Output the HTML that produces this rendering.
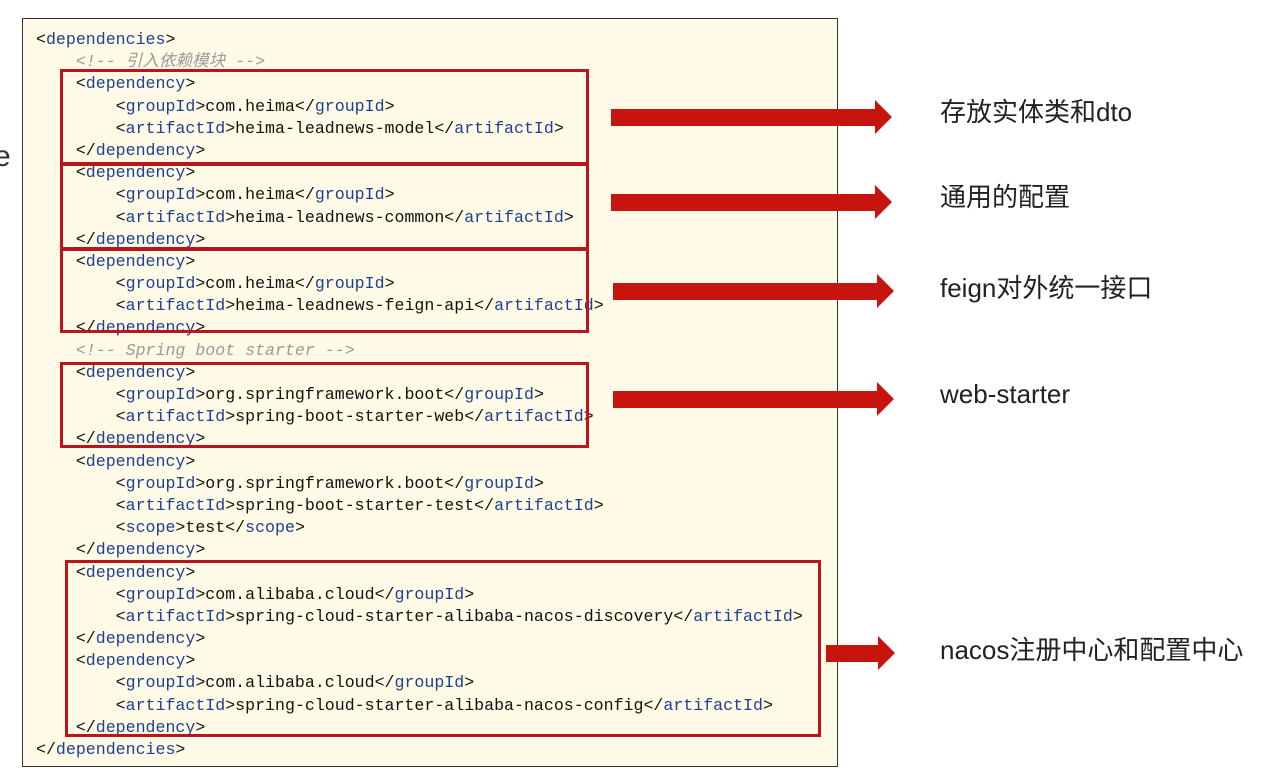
<!DOCTYPE html>
<html><head><meta charset="utf-8"><style>
body{margin:0;width:1261px;height:771px;background:#fff;position:relative;overflow:hidden;font-family:"Liberation Sans","Noto Sans CJK SC",sans-serif}
.code{position:absolute;left:22px;top:18px;width:816px;height:749px;background:#fffbe6;border:1px solid #333;box-sizing:border-box}
pre{position:absolute;left:36px;top:29px;margin:0;font-family:"Liberation Mono","Noto Sans CJK SC",monospace;font-size:16.6px;line-height:22.19px;color:#111}
.t{color:#1d3f94}.c{color:#9a9a9a;font-style:italic}
.box{position:absolute;border:3px solid #bb141a;box-sizing:border-box}
.lbl{position:absolute;left:940px;font-size:26px;color:#222;line-height:30px}
svg{position:absolute;left:0;top:0}
</style></head><body>
<div style="position:absolute;left:-6px;top:140px;font-size:30px;color:#333">e</div>
<div class="code"></div>
<pre>&lt;<span class="t">dependencies</span>&gt;
    <span class="c">&lt;!-- 引入依赖模块 --&gt;</span>
    &lt;<span class="t">dependency</span>&gt;
        &lt;<span class="t">groupId</span>&gt;com.heima&lt;/<span class="t">groupId</span>&gt;
        &lt;<span class="t">artifactId</span>&gt;heima-leadnews-model&lt;/<span class="t">artifactId</span>&gt;
    &lt;/<span class="t">dependency</span>&gt;
    &lt;<span class="t">dependency</span>&gt;
        &lt;<span class="t">groupId</span>&gt;com.heima&lt;/<span class="t">groupId</span>&gt;
        &lt;<span class="t">artifactId</span>&gt;heima-leadnews-common&lt;/<span class="t">artifactId</span>&gt;
    &lt;/<span class="t">dependency</span>&gt;
    &lt;<span class="t">dependency</span>&gt;
        &lt;<span class="t">groupId</span>&gt;com.heima&lt;/<span class="t">groupId</span>&gt;
        &lt;<span class="t">artifactId</span>&gt;heima-leadnews-feign-api&lt;/<span class="t">artifactId</span>&gt;
    &lt;/<span class="t">dependency</span>&gt;
    <span class="c">&lt;!-- Spring boot starter --&gt;</span>
    &lt;<span class="t">dependency</span>&gt;
        &lt;<span class="t">groupId</span>&gt;org.springframework.boot&lt;/<span class="t">groupId</span>&gt;
        &lt;<span class="t">artifactId</span>&gt;spring-boot-starter-web&lt;/<span class="t">artifactId</span>&gt;
    &lt;/<span class="t">dependency</span>&gt;
    &lt;<span class="t">dependency</span>&gt;
        &lt;<span class="t">groupId</span>&gt;org.springframework.boot&lt;/<span class="t">groupId</span>&gt;
        &lt;<span class="t">artifactId</span>&gt;spring-boot-starter-test&lt;/<span class="t">artifactId</span>&gt;
        &lt;<span class="t">scope</span>&gt;test&lt;/<span class="t">scope</span>&gt;
    &lt;/<span class="t">dependency</span>&gt;
    &lt;<span class="t">dependency</span>&gt;
        &lt;<span class="t">groupId</span>&gt;com.alibaba.cloud&lt;/<span class="t">groupId</span>&gt;
        &lt;<span class="t">artifactId</span>&gt;spring-cloud-starter-alibaba-nacos-discovery&lt;/<span class="t">artifactId</span>&gt;
    &lt;/<span class="t">dependency</span>&gt;
    &lt;<span class="t">dependency</span>&gt;
        &lt;<span class="t">groupId</span>&gt;com.alibaba.cloud&lt;/<span class="t">groupId</span>&gt;
        &lt;<span class="t">artifactId</span>&gt;spring-cloud-starter-alibaba-nacos-config&lt;/<span class="t">artifactId</span>&gt;
    &lt;/<span class="t">dependency</span>&gt;
&lt;/<span class="t">dependencies</span>&gt;</pre>
<div class="box" style="left:60px;top:69px;width:529px;height:96px"></div>
<div class="box" style="left:60px;top:163px;width:529px;height:87px"></div>
<div class="box" style="left:60px;top:248px;width:529px;height:85px"></div>
<div class="box" style="left:60px;top:362px;width:529px;height:86px"></div>
<div class="box" style="left:65px;top:560px;width:756px;height:177px"></div>
<svg width="1261" height="771">
<g fill="#c8140e">
<polygon points="611,109 875,109 875,100 892,117 875,134 875,126 611,126"/>
<polygon points="611,194 875,194 875,185 892,202 875,219 875,211 611,211"/>
<polygon points="613,283 877,283 877,274 894,291 877,308 877,300 613,300"/>
<polygon points="613,391 877,391 877,382 894,399 877,416 877,408 613,408"/>
<polygon points="826,645 878,645 878,636 895,653 878,670 878,662 826,662"/>
</g></svg>
<div class="lbl" style="top:97px">存放实体类和dto</div>
<div class="lbl" style="top:182px">通用的配置</div>
<div class="lbl" style="top:273px">feign对外统一接口</div>
<div class="lbl" style="top:379px">web-starter</div>
<div class="lbl" style="top:635px">nacos注册中心和配置中心</div>
</body></html>
